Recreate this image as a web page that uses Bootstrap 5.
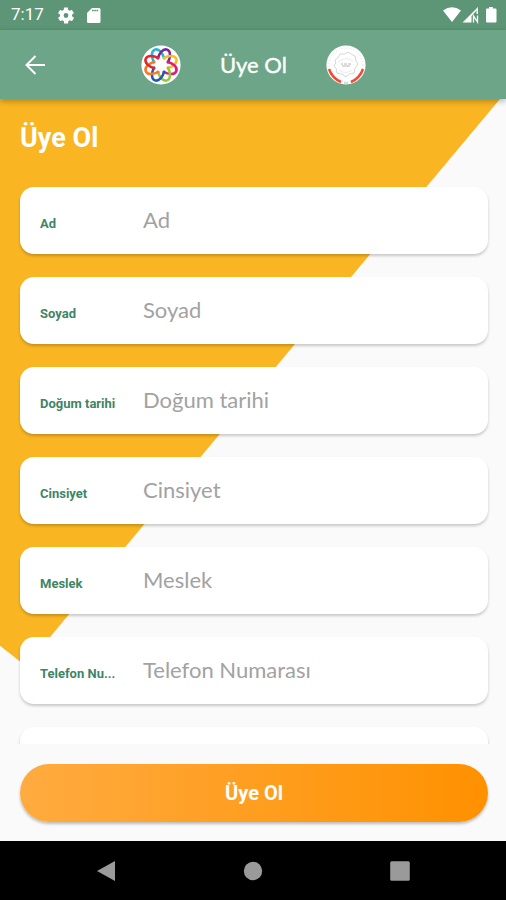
<!DOCTYPE html>
<html lang="tr">
<head>
<meta charset="utf-8">
<meta name="viewport" content="width=device-width, initial-scale=1">
<title>Üye Ol</title>
<link href="https://cdn.jsdelivr.net/npm/bootstrap@5.3.0/dist/css/bootstrap.min.css" rel="stylesheet">
<style>
  body { font-family: Roboto, "Liberation Sans", sans-serif; background: #fafafa; }
  .status-strip { height: 30px; padding: 0 8px 0 11px; background: #5d9676; font-size: 17px; }
  .status-icons { gap: 12px; margin-left: 14px; }
  .top-bar { height: 69px; background: #6ca587; box-shadow: 0 2px 6px rgba(0,0,0,.3); z-index: 2; }
  .top-bar .back { width: 44px; height: 44px; margin-left: 13px; }
  .brand-group { gap: 39px; margin-left: 84px; }
  .bar-title { font: 400 22px/28px Lato, sans-serif; -webkit-text-stroke: 0.4px #fff; }
  .screen { isolation: isolate; min-height: 0; }
  .screen::before { content: ""; position: absolute; inset: 0; z-index: -1; background: #f9b522;
    clip-path: polygon(0 0, 98.8% 0, 5.1% 76.4%, 0 73.7%); }
  .fields { min-height: 0; overflow-y: auto; scrollbar-width: none; padding: 20px 18px 0 20px; }
  .fields::-webkit-scrollbar { display: none; }
  .page-title { font-size: 27px; line-height: 38px; margin-bottom: 30px; }
  .field { flex: none; height: 67px; margin-bottom: 23px; padding: 0 20px; border-radius: 14px; background: #fff;
    box-shadow: 0 2px 3px rgba(0,0,0,.2); }
  .field label { width: 84px; margin-right: 19px; padding-top: 6px; font-size: 13px; line-height: 20px; font-weight: 700; color: #3f8565; }
  .field input { font: 400 22px/32px Lato, sans-serif; min-width: 0; padding: 0 0 2px; color: #444; }
  .field input::placeholder { color: #a2a2a2; opacity: 1; }
  .action { padding: 20px 18px 19px 20px; background: #fafafa; }
  .action .btn { height: 58px; font-size: 20px; font-weight: 700; color: #fff; border: 0;
    background: linear-gradient(90deg, #ffab40, #ff9100); box-shadow: 0 2px 3px rgba(0,0,0,.25); }
  .system-nav { height: 59px; padding: 0 33px; background: #000; }
  .system-nav button { width: 146px; height: 59px; }
</style>
</head>
<body>
<div class="d-flex flex-column vh-100">
  <div class="status-strip d-flex align-items-center flex-shrink-0 text-white">
    <span>7:17</span>
    <span class="status-icons d-flex align-items-center">
      <svg width="16" height="17" viewBox="2 2 20 20" fill="#fff" aria-hidden="true"><path d="M19.400 13a7.500 7.500 0 0 0 0-2l2.100-1.600a.5.5 0 0 0 .1-.7l-2-3.400a.5.5 0 0 0-.6-.2l-2.500 1a7.300 7.300 0 0 0-1.700-1l-.4-2.700a.5.5 0 0 0-.5-.4h-4a.5.5 0 0 0-.5.4L9.200 5.100c-.6.300-1.200.6-1.700 1l-2.500-1a.5.5 0 0 0-.6.200l-2 3.400a.5.5 0 0 0 .1.700L4.600 11a7.500 7.500 0 0 0 0 2l-2.100 1.600a.5.5 0 0 0-.1.700l2 3.400c.1.200.4.300.6.200l2.500-1c.5.400 1.100.8 1.700 1l.4 2.700c0 .2.200.4.5.4h4c.2 0 .5-.2.500-.4l.4-2.700a7.300 7.300 0 0 0 1.700-1l2.500 1c.2.100.5 0 .6-.2l2-3.400a.5.5 0 0 0-.1-.7zM12 15a3 3 0 1 1 0-6 3 3 0 0 1 0 6z"/></svg>
      <svg width="15" height="17" viewBox="0 0 15 17" aria-hidden="true"><path d="M6 1h7q1.500 0 1.500 1.500v12q0 1.500-1.500 1.500H2.500Q1 16 1 14.500V6z" fill="#fff"/><path d="M6 3.500h6.500" stroke="#5d9676" stroke-width="1.500" stroke-dasharray="1.700 .5"/></svg>
    </span>
    <svg class="ms-auto" width="55" height="18" viewBox="0 0 55 18" fill="#fff" aria-hidden="true"><path d="M0 4.500Q9-2 18 4.500L9 16z"/><path d="M35 1v7h-1.500V4.500L28.500 10v6.500h-9z"/><path d="M30.500 16.500V10l4 6V9.500" fill="none" stroke="#fff" stroke-width="1.300"/><path d="M46 1h4v1.500h2.500q1 0 1 1V15.500q0 1-1 1h-8.500q-1 0-1-1V3.500q0-1 1-1H46z"/></svg>
  </div>

  <header class="top-bar position-relative d-flex align-items-center flex-shrink-0 text-white">
    <button class="back btn p-0 border-0 d-flex align-items-center justify-content-center" type="button" aria-label="Geri">
      <svg width="22" height="22" viewBox="0 0 22 22" fill="none" stroke="#fff" stroke-width="2"><path d="M21 11H2.500M11.500 2 2.500 11l9 9"/></svg>
    </button>
    <div class="brand-group d-flex align-items-center">
      <svg width="40" height="40" viewBox="-20 -20 40 40" aria-hidden="true">
        <circle r="19.600" fill="#fff"/>
        <g fill="none" stroke-width="2.500" stroke-linecap="round">
          <path d="M5-5.500C10-6 16.500-4.500 16.500 0S10 6 5 5.500" stroke="#27b5d1" transform="rotate(-112)"/>
          <path d="M5-5.500C10-6 16.500-4.500 16.500 0S10 6 5 5.500" stroke="#7c2793" transform="rotate(-68)"/>
          <path d="M5-5.500C10-6 16.500-4.500 16.500 0S10 6 5 5.500" stroke="#f7bd22" transform="rotate(-22)"/>
          <path d="M5-5.500C10-6 16.500-4.500 16.500 0S10 6 5 5.500" stroke="#df197e" transform="rotate(22)"/>
          <path d="M5-5.500C10-6 16.500-4.500 16.500 0S10 6 5 5.500" stroke="#93c83e" transform="rotate(68)"/>
          <path d="M5-5.500C10-6 16.500-4.500 16.500 0S10 6 5 5.500" stroke="#2458b5" transform="rotate(112)"/>
          <path d="M5-5.500C10-6 16.500-4.500 16.500 0S10 6 5 5.500" stroke="#f47a27" transform="rotate(158)"/>
          <path d="M5-5.500C10-6 16.500-4.500 16.500 0S10 6 5 5.500" stroke="#e5232e" transform="rotate(-158)"/>
        </g>
      </svg>
      <span class="bar-title">Üye Ol</span>
      <svg width="40" height="40" viewBox="-20 -20 40 40" fill="none" aria-hidden="true">
        <circle r="19.600" fill="#fff"/>
        <circle r="17" stroke="#dcdcdc" stroke-dasharray="1 2"/>
        <g stroke="#cccccc" stroke-width=".8">
          <path d="M-11-5Q-7-7-6-11Q-1-10 2-13Q6-10 9-9Q9-4 12-1Q8 3 8 8Q3 8 0 12Q-4 8-9 8Q-9 3-12 1Q-9-2-11-5z"/>
          <path d="M-8-3Q0-9 7-4M-7 5Q0 10 6 5" stroke="#e4e4e4"/>
        </g>
        <path d="M-5-1h2m1 0h3m1 0h3M-4 1h8" stroke="#b8b8b8"/>
        <path d="M-17 4Q-14 13-5 17M17 4Q14 13 5 17" stroke="#ed4d35" stroke-width="2.500"/>
        <path d="M-2 18h4" stroke="#bbb"/>
      </svg>
    </div>
  </header>

  <main class="screen position-relative flex-grow-1 d-flex flex-column">
    <form id="signup" class="fields flex-grow-1 d-flex flex-column">
      <h1 class="page-title fw-bold text-white flex-shrink-0">Üye Ol</h1>
      <div class="field d-flex align-items-center"><label for="ad">Ad</label><input class="flex-grow-1 border-0 bg-transparent" id="ad" type="text" placeholder="Ad"></div>
      <div class="field d-flex align-items-center"><label for="soyad">Soyad</label><input class="flex-grow-1 border-0 bg-transparent" id="soyad" type="text" placeholder="Soyad"></div>
      <div class="field d-flex align-items-center"><label for="dogum">Doğum tarihi</label><input class="flex-grow-1 border-0 bg-transparent" id="dogum" type="text" placeholder="Doğum tarihi"></div>
      <div class="field d-flex align-items-center"><label for="cinsiyet">Cinsiyet</label><input class="flex-grow-1 border-0 bg-transparent" id="cinsiyet" type="text" placeholder="Cinsiyet"></div>
      <div class="field d-flex align-items-center"><label for="meslek">Meslek</label><input class="flex-grow-1 border-0 bg-transparent" id="meslek" type="text" placeholder="Meslek"></div>
      <div class="field d-flex align-items-center"><label for="telefon">Telefon Nu...</label><input class="flex-grow-1 border-0 bg-transparent" id="telefon" type="tel" placeholder="Telefon Numarası"></div>
      <div class="field"></div>
    </form>
    <div class="action">
      <button class="btn rounded-pill w-100" type="submit" form="signup">Üye Ol</button>
    </div>
  </main>

  <nav class="system-nav d-flex justify-content-between align-items-center flex-shrink-0">
    <button class="btn p-0 border-0" type="button" aria-label="Geri"><svg width="22" height="22" viewBox="0 0 22 22"><path d="M2 11 20 1v20z" fill="#9a9a9a"/></svg></button>
    <button class="btn p-0 border-0" type="button" aria-label="Ana ekran"><svg width="22" height="22" viewBox="0 0 22 22"><circle cx="11" cy="11" r="9.200" fill="#9a9a9a"/></svg></button>
    <button class="btn p-0 border-0" type="button" aria-label="Son uygulamalar"><svg width="22" height="22" viewBox="0 0 22 22"><rect x="1.200" y="1.200" width="19.600" height="19.600" rx="1.500" fill="#9a9a9a"/></svg></button>
  </nav>
</div>
<script src="https://cdn.jsdelivr.net/npm/bootstrap@5.3.0/dist/js/bootstrap.bundle.min.js"></script>
</body>
</html>
